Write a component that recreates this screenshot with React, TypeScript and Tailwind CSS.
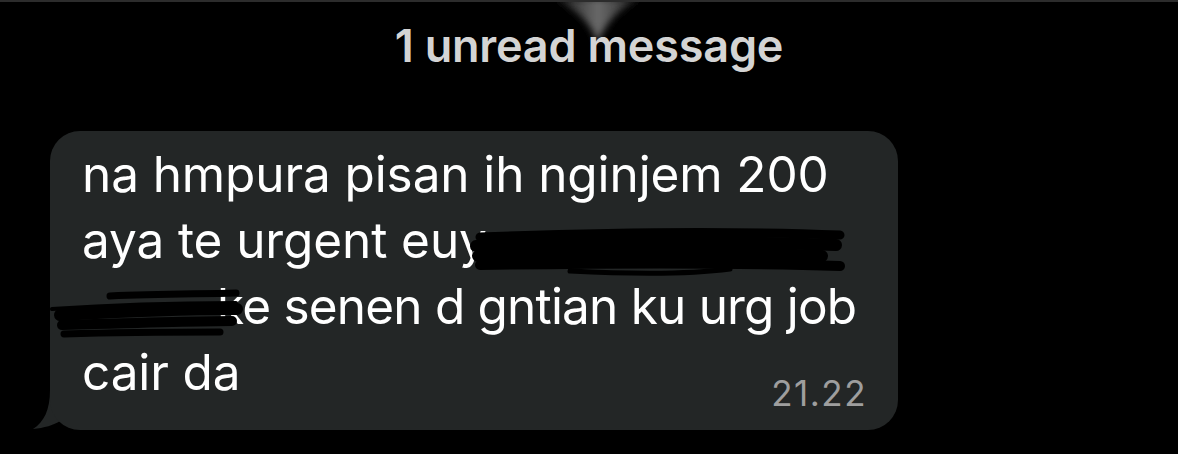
export default function App() {
  return (
    <div className="w-[1178px] h-[454px] bg-black overflow-hidden font-['Inter','Liberation_Sans',sans-serif]">
      <div className="h-[2px] bg-[#2c2c2c]" />
      <div className="relative flex flex-col items-center">
        <svg className="absolute top-0 left-[548px]" width="100" height="44" viewBox="0 0 100 44">
          <defs>
            <linearGradient id="funH" x1="0" y1="0" x2="1" y2="0">
              <stop offset="0" stopColor="#151515" />
              <stop offset="0.5" stopColor="#6a6a6a" />
              <stop offset="1" stopColor="#151515" />
            </linearGradient>
            <filter id="soft" x="-20%" y="-20%" width="140%" height="140%">
              <feGaussianBlur stdDeviation="3.5" />
            </filter>
          </defs>
          <path d="M6 -4 C26 6 38 18 44 28 C47 34 48 37 49 40 C51 36 54 31 58 25 C65 14 76 4 94 -4 Z" fill="url(#funH)" filter="url(#soft)" />
        </svg>
        <div className="relative mt-[19px] text-[45px] leading-[50px] font-semibold text-[#d4d4d4] tracking-[-0.2px]">
          1 unread message
        </div>
      </div>

      <div className="relative ml-[50px] mt-[60px] w-[848px] h-[299px]">
        <svg className="absolute left-[-20px] bottom-0" width="60" height="60" viewBox="0 0 60 60">
          <path d="M20 0 L20 20 C20 40 14 52 3 59 C14 58 24 55 30 51 C36 56 44 59 56 60 L40 0 Z" fill="#232626" />
        </svg>
        <div className="relative h-full bg-[#232626] rounded-[30px] pl-[32px] pr-[31px] pt-[10px] text-white text-[49.5px] leading-[66px] tracking-[-0.1px] whitespace-nowrap">
          <div>na hmpura pisan ih nginjem 200</div>
          <div className="flex">
            <span>aya te urgent euy</span>
            <span className="inline-block w-[340px]" />
          </div>
          <div className="flex">
            <span className="inline-block w-[135px] shrink-0" />
            <span className="tracking-[-0.8px]">ke senen d gntian ku urg job</span>
          </div>
          <div className="flex justify-between">
            <span>cair da</span>
            <span className="self-end mb-[-8px] text-[35px] leading-[40px] text-[#9e9e9e] tracking-[1.5px]">21.22</span>
          </div>
        </div>

        <svg className="absolute left-0 top-0" width="848" height="299" viewBox="0 0 848 299" fill="none" stroke="#000" strokeLinecap="round">
          <path d="M430 106 C560 101 690 100 790 104" strokeWidth="9" />
          <path d="M426 115 C560 111 690 110 786 114" strokeWidth="12" />
          <path d="M428 125 C560 123 690 121 772 125" strokeWidth="12" />
          <path d="M430 134 C560 132 700 132 790 135" strokeWidth="10" />
          <path d="M520 140 C600 144 650 142 680 138" strokeWidth="5" />
          <path d="M60 165 C110 163 150 163 186 162" strokeWidth="7" />
          <path d="M2 178 C60 174 140 172 186 172" strokeWidth="4" />
          <path d="M10 184 C80 180 150 178 187 178" strokeWidth="12" />
          <path d="M12 194 C80 192 150 190 182 190" strokeWidth="10" />
          <path d="M14 203 C80 201 140 201 170 201" strokeWidth="7" />
        </svg>
      </div>
    </div>
  );
}
